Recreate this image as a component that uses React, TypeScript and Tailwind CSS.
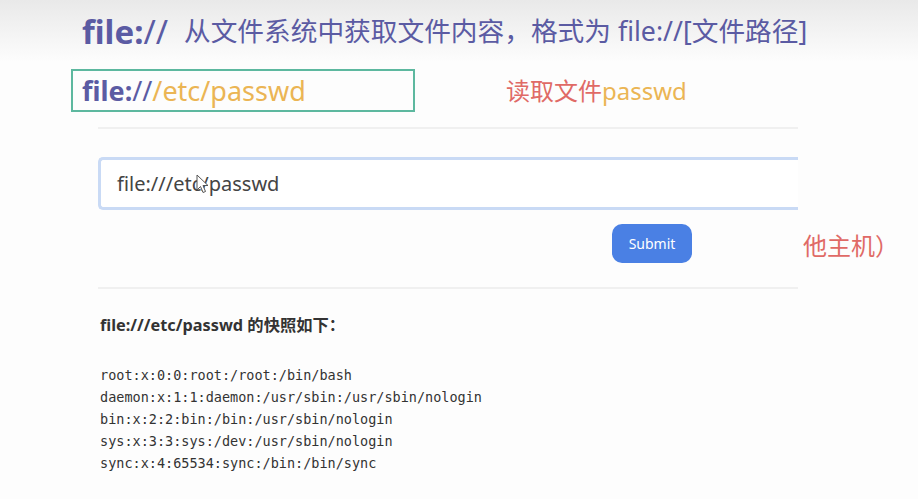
import React from 'react';

const sans = { fontFamily: '"Noto Sans", "Noto Sans CJK SC", sans-serif' };

const lines = [
  'root:x:0:0:root:/root:/bin/bash',
  'daemon:x:1:1:daemon:/usr/sbin:/usr/sbin/nologin',
  'bin:x:2:2:bin:/bin:/usr/sbin/nologin',
  'sys:x:3:3:sys:/dev:/usr/sbin/nologin',
  'sync:x:4:65534:sync:/bin:/bin/sync',
];

const App: React.FC = () => {
  return (
    <div className="w-[918px] h-[499px] overflow-hidden bg-[#fdfdfd] font-['Noto_Sans','Noto_Sans_CJK_SC',sans-serif]">
      {/* slide title */}
      <div className="h-[62px] bg-gradient-to-b from-[#e9e9e9] to-[#fdfdfd] flex items-center pl-[82px] text-[#5b5ba3]">
        <span className="text-[33px] leading-none"><b>file:</b>//</span>
        <span className="ml-[16px] text-[26.7px] leading-none">从文件系统中获取文件内容，格式为 file://[文件路径]</span>
      </div>

      <div className="flex items-center mt-[7px]">
        <div className="ml-[71px] w-[344px] h-[43px] border-2 border-[#5db89f] flex items-center pl-[9px] text-[27px] leading-none">
          <span className="text-[#5b5ba3]"><b>file:</b>//</span>
          <span className="text-[#ebb554]">/etc/passwd</span>
        </div>
        <div className="ml-[91px] text-[24px] leading-none text-[#e06a66]">
          读取文件<span className="text-[#ebb554]">passwd</span>
        </div>
      </div>

      <div className="ml-[98px] w-[700px] mt-[15px] border-t-2 border-[#f0f0f0]" />

      {/* form */}
      <div className="ml-[98px] w-[700px] mt-[28px] relative">
        <div className="h-[53px] rounded-l-[5px] border-[3px] border-r-0 border-[#c9daf5] bg-white flex items-center pl-[16px] text-[20px] text-[#444]" style={sans}>
          file:///etc/passwd
        </div>
        <svg className="absolute left-[98px] top-[17px]" width="14" height="20" viewBox="0 0 14 20">
          <path d="M1 1 L1 16 L4.5 12.5 L7 18.5 L9.5 17.5 L7 11.5 L12 11.5 Z" fill="#fff" stroke="#555" strokeWidth="1" />
        </svg>
      </div>

      <div className="flex items-center mt-[14px]">
        <div className="ml-[98px] w-[700px] flex">
          <button className="ml-[514px] w-[80px] h-[39px] rounded-[10px] bg-[#4a80e4] text-white text-[14px]" style={sans}>
            Submit
          </button>
        </div>
        <span className="ml-[5px] mt-[4px] whitespace-nowrap text-[24px] leading-none text-[#e06a66]">他主机）</span>
      </div>

      <div className="ml-[98px] w-[700px] mt-[24px] border-t-2 border-[#f0f0f0]" />

      {/* snapshot */}
      <div className="ml-[100px] mt-[28px] text-[#333]">
        <div className="text-[16.3px] font-bold leading-none" style={sans}>file:///etc/passwd 的快照如下：</div>
        <div className="mt-[31px] font-['DejaVu_Sans_Mono',monospace] text-[13.5px] leading-[22px]">
          {lines.map((l) => (
            <div key={l}>{l}</div>
          ))}
        </div>
      </div>
    </div>
  );
};

export default App;
